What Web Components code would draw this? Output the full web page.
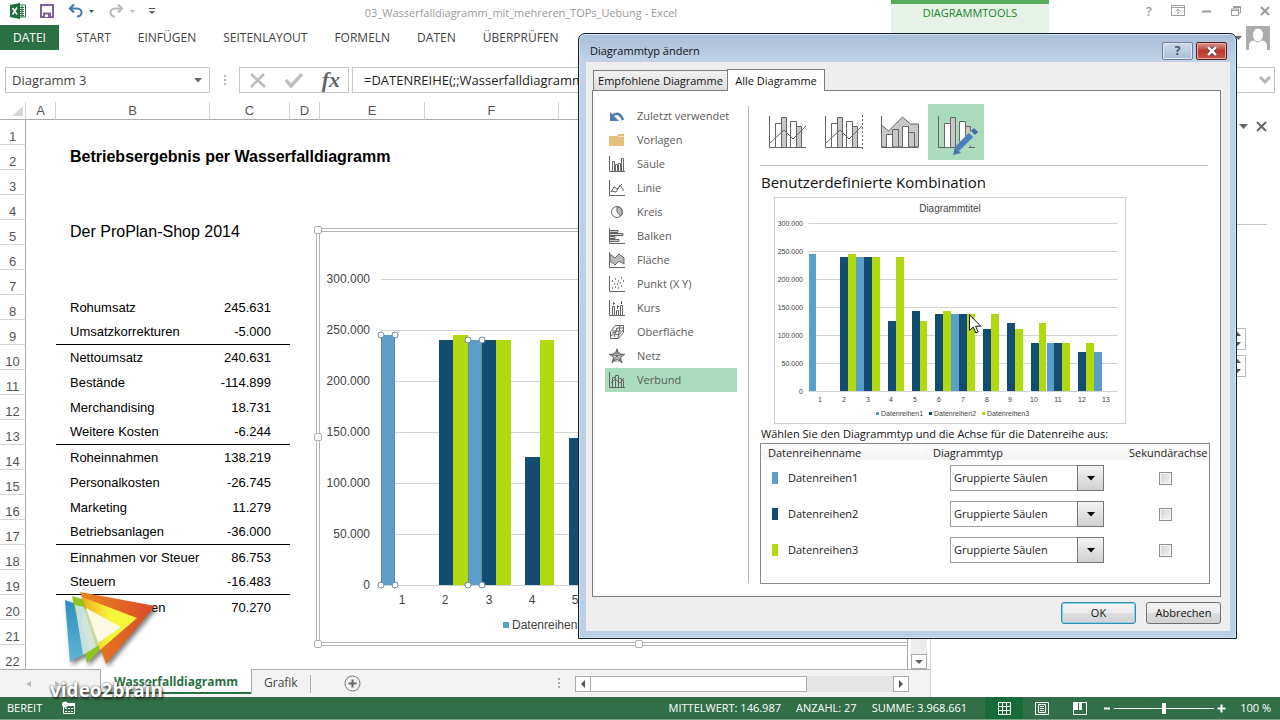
<!DOCTYPE html>
<html lang="de">
<head>
<meta charset="utf-8">
<title>03_Wasserfalldiagramm_mit_mehreren_TOPs_Uebung - Excel</title>
<style>
html, body { height: 100%; margin: 0; }
body { font: 12px/16px "Open Sans", "Noto Sans", sans-serif; color: #444; background: #fff; overflow: hidden; position: relative; }
</style>
</head>
<body>
<excel-window></excel-window>
<chart-type-dialog></chart-type-dialog>
<brand-mark></brand-mark>
<mouse-pointer></mouse-pointer>

<script>
const RESET = `
  :host { box-sizing: border-box; }
  *, *::before, *::after { box-sizing: border-box; }
  button, input, select { font: inherit; color: inherit; margin: 0; padding: 0; border: 0; background: none; border-radius: 0; outline: 0; }
  button { display: flex; align-items: center; justify-content: center; white-space: nowrap; }
  svg { display: block; flex: none; }
`;
function define(name, css, html, setup) {
  customElements.define(name, class extends HTMLElement {
    constructor() {
      super();
      const t = document.createElement('template');
      t.innerHTML = `<style>${RESET}${css}</style>${typeof html === 'function' ? html(this) : html}`;
      this.attachShadow({ mode: 'open' }).append(t.content.cloneNode(true));
      if (setup) setup(this, this.shadowRoot);
    }
  });
}

/* ---------- shared data ---------- */
const SERIES = [
  { name: 'Datenreihen1', color: '#5b9fc9', values: [245.6, 0, 240.6, 0, 0, 0, 138.2, 0, 0, 0, 86.8, 0, 70.3] },
  { name: 'Datenreihen2', color: '#134d72', values: [0, 240.6, 240.6, 125.7, 144.5, 138.2, 138.2, 111.5, 122.7, 86.8, 86.8, 70.3, 0] },
  { name: 'Datenreihen3', color: '#b1d90f', values: [0, 245.6, 240.6, 240.6, 125.7, 144.5, 138.2, 138.2, 111.5, 122.7, 86.8, 86.8, 0] }
];
const AXIS = ['300.000', '250.000', '200.000', '150.000', '100.000', '50.000', '0'];

/* Clustered column chart drawn as SVG; o holds the geometry in pixels */
function columnChart(o) {
  const base = o.top + o.step * 6;
  let s = `<svg width="${o.w}" height="${o.h}" font-family="Liberation Sans, Arial, sans-serif" font-size="${o.font}" fill="#444" role="img" aria-label="Säulendiagramm">`;
  AXIS.forEach((t, i) => {
    const y = o.top + i * o.step;
    s += `<path d="M${o.left} ${y + .5}H${o.right}" stroke="#d3d3d3"/>`;
    s += `<text x="${Math.floor(o.left) - o.axisGap}" y="${y + o.drop}" text-anchor="end">${t}</text>`;
  });
  SERIES.forEach((ser, k) => ser.values.forEach((v, i) => {
    if (!v) return;
    const x = Math.round(o.left + i * o.cat + k * o.bar), x2 = Math.round(o.left + i * o.cat + (k + 1) * o.bar);
    const h = Math.floor(v * o.step / 50);
    s += `<rect x="${x}" y="${base - h}" width="${x2 - x}" height="${h}" fill="${ser.color}"/>`;
  }));
  if (o.selected) SERIES[0].values.forEach((v, i) => {
    if (!v) return;
    const x = Math.round(o.left + i * o.cat), x2 = Math.round(o.left + i * o.cat + o.bar), y = base - Math.floor(v * o.step / 50);
    s += `<path d="M${x + .5} ${base}V${y}M${x2 - .5} ${base}V${y}" stroke="#6f8797"/>`;
    [x, x2].forEach(a => [base, y].forEach(b => s += `<circle cx="${a}" cy="${b}" r="3" fill="#fff" stroke="#6d8ba3"/>`));
  });
  for (let i = 0; i < o.labels; i++)
    s += `<text x="${Math.floor(o.left + (i + .5) * o.cat)}" y="${base + o.catDrop}" text-anchor="middle">${i + 1}</text>`;
  SERIES.forEach((ser, k) => {
    const x = o.legendX + k * o.legendStep;
    s += `<rect x="${x}" y="${o.legendY - o.key}" width="${o.key}" height="${o.key}" fill="${ser.color}"/>`;
    s += `<text x="${x + o.key + o.keyGap}" y="${o.legendY + o.legendDrop}">${ser.name}</text>`;
  });
  if (o.title) s += `<text x="${o.w / 2}" y="14" font-size="10" text-anchor="middle">${o.title}</text>`;
  return s + '</svg>';
}

/* ---------- window header: title row, ribbon tabs ---------- */
define('excel-header', `
  :host { display: grid; grid-template-columns: 151px 1fr 158px 231px; grid-template-rows: 25px 25px; height: 67px; }
  .quick { display: flex; align-items: center; padding: 0 0 3px 10px; }
  .quick button { margin-right: 6px; height: 18px; }
  .title { text-align: center; color: #9a9a9a; font-size: 11px; line-height: 26px; white-space: nowrap; }
  .context { grid-column: 3; grid-row: 1 / 3; background: #e6f2e8; border-top: 4px solid #57ac5b; color: #20861f; font-size: 11px; line-height: 18px; text-align: center; }
  .controls { display: flex; justify-content: flex-end; gap: 15px; padding: 0 8px 3px 0; align-items: center; color: #9c9c9c; }
  .controls button { width: 14px; height: 16px; font-size: 13px; font-weight: 600; }
  nav { grid-row: 2; grid-column: 1 / 3; display: flex; align-items: stretch; }
  nav button { margin-right: 27px; color: #444; }
  nav .file { background: #2b7043; color: #fff; width: 59px; margin-right: 17px; }
  .account { grid-row: 2; grid-column: 4; display: flex; justify-content: flex-end; padding-right: 10px; gap: 4px; }
`, `
  <div class="quick">
    <button aria-label="Excel" style="margin-right:14px"><svg width="16" height="16"><path d="M8 2h7.500v12H8z" fill="#fff" stroke="#2b7043"/><path d="M10 4.500h4M10 6.500h4M10 8.500h4M10 10.500h4M10 12.500h4M12 3v11" stroke="#2b7043"/><path d="M0 2 10 0v16L0 14z" fill="#1d6b3b"/><path d="m2.500 5 4.500 6.500M7 4.500 2.500 11.500" stroke="#fff" stroke-width="1.600"/></svg></button>
    <button aria-label="Speichern" style="margin-right:14px"><svg width="14" height="14"><path d="M1 1h12v12H1z" fill="#fff" stroke="#80609c" stroke-width="2"/><path d="M3 8.500h8V14H3z" fill="#80609c"/><path d="M5 10.500h3V13H5z" fill="#fff"/></svg></button>
    <button aria-label="Rückgängig"><svg width="15" height="14"><path d="M2 4.500h7c6 0 6 8 0 8" fill="none" stroke="#4675ae" stroke-width="2"/><path d="M6 .5 2 4.500l4 4" fill="none" stroke="#4675ae" stroke-width="2.200"/></svg></button>
    <button aria-label="Rückgängig-Liste" style="margin-right:15px"><svg width="5" height="3"><path d="M0 0h5L2.500 3z" fill="#555"/></svg></button>
    <button aria-label="Wiederholen"><svg width="15" height="14"><path d="M13 4.500H6c-6 0-6 8 0 8" fill="none" stroke="#b9b9b9" stroke-width="2"/><path d="m9 .5 4 4-4 4" fill="none" stroke="#b9b9b9" stroke-width="2.200"/></svg></button>
    <button aria-label="Wiederholen-Liste" style="margin-right:14px"><svg width="5" height="3"><path d="M0 0h5L2.500 3z" fill="#bbb"/></svg></button>
    <button aria-label="Anpassen" style="margin:0"><svg width="6" height="7"><path d="M0 .5h6" stroke="#555"/><path d="M0 3h6L3 6z" fill="#555"/></svg></button>
  </div>
  <div class="title">03_Wasserfalldiagramm_mit_mehreren_TOPs_Uebung - Excel</div>
  <div class="context">DIAGRAMMTOOLS</div>
  <div class="controls">
    <button aria-label="Hilfe">?</button>
    <button aria-label="Menüband"><svg width="14" height="12"><path d="M.5.500h13v10H.5zM.5 2.500h13M7 9V4.500M4.500 6.500 7 4l2.500 2.500" fill="none" stroke="#9c9c9c"/></svg></button>
    <button aria-label="Minimieren"><svg width="10" height="3"><path d="M0 1.500h9" stroke="#9c9c9c" stroke-width="2"/></svg></button>
    <button aria-label="Wiederherstellen"><svg width="11" height="10"><path d="M.5 3h7v6.500h-7zM.5 4.500h7M2.500 2.500V.5h7V7H8M3 1.500h6" fill="none" stroke="#9c9c9c"/></svg></button>
    <button aria-label="Schließen"><svg width="10" height="10"><path d="m1 1 8 8m0-8L1 9" stroke="#9c9c9c" stroke-width="2"/></svg></button>
  </div>
  <nav>
    <button class="file">DATEI</button><button>START</button><button>EINFÜGEN</button><button>SEITENLAYOUT</button><button>FORMELN</button><button>DATEN</button><button>ÜBERPRÜFEN</button>
  </nav>
  <div class="account"><button aria-label="Konto-Menü"><svg width="7" height="4"><path d="M0 0h7L3.500 4z" fill="#666"/></svg></button><button aria-label="Konto"><svg width="24" height="24"><path d="M0 0h24v24H0z" fill="#ababab"/><path d="M3 24v-4q0-5 5-5.500h8q5 .5 5 5.500v4z" fill="#fff"/><ellipse cx="12" cy="9" rx="5.500" ry="7" fill="#fff" stroke="#ababab"/></svg></button></div>
`);

/* ---------- name box and formula line ---------- */
define('formula-bar', `
  :host { display: flex; height: 35px; padding: 0 5px 9px; font-size: 13px; }
  .box { display: flex; align-items: center; border: 1px solid #c6c6c6; }
  .name { width: 205px; padding: 0 7px 0 6px; }
  input { width: 100%; min-width: 0; }
  .dots { width: 29px; align-self: center; }
  .fx { width: 110px; margin-right: 3px; justify-content: space-between; padding: 0 8px 0 9px; }
  .line { flex: 1; padding: 0 3px 0 11px; color: #222; }
  .fx button:last-child { font: italic bold 22px/22px "Liberation Serif", serif; color: #666; }
`, `
  <div class="box name"><input aria-label="Namenfeld" value="Diagramm 3"><button aria-label="Namenliste"><svg width="8" height="5"><path d="M0 0h8L4 4.500z" fill="#666"/></svg></button></div>
  <svg class="dots" width="29" height="12"><path d="M14 1h2v2h-2zM14 5h2v2h-2zM14 9h2v2h-2z" fill="#b5b5b5"/></svg>
  <div class="box fx">
    <button aria-label="Abbrechen"><svg width="18" height="17"><path d="m2 2 14 13M15 2 2 15" stroke="#bdbdbd" stroke-width="2.500"/></svg></button>
    <button aria-label="Eingeben"><svg width="20" height="16"><path d="m2 8 5 6L18 2" fill="none" stroke="#c0c0c0" stroke-width="3.500"/></svg></button>
    <button aria-label="Funktion einfügen">fx</button>
  </div>
  <div class="box line"><input aria-label="Formel" value="=DATENREIHE(;;Wasserfalldiagramm"><button aria-label="Erweitern"><svg width="12" height="8"><path d="m1 1 5 5 5-5" fill="none" stroke="#b5b5b5" stroke-width="3"/></svg></button></div>
`);

/* ---------- embedded chart object with selection frame ---------- */
define('sheet-chart', `
  :host { display: block; width: 644px; height: 418px; border: 1px solid #b4b4b4; padding: 2px; background: #fff; }
  .inner { border: 1px solid #b4b4b4; height: 100%; position: relative; overflow: hidden; }
  i { position: absolute; width: 8px; height: 8px; border: 1px solid #b0b0b0; border-radius: 2px; background: #fff; }
  .w { left: -3px; } .c { left: 318px; } .e { right: -3px; } .n { top: -3px; } .m { top: 204px; } .s { bottom: -3px; }
`, `
  <div class="inner">${columnChart({ w: 638, h: 412, font: 12, left: 61, right: 622, top: 47, step: 51, axisGap: 11, drop: 4, cat: 43.3, bar: 14.4, labels: 12, catDrop: 19, legendX: 183, legendY: 396, legendStep: 94, key: 6, keyGap: 3, legendDrop: 1, selected: true })}</div>
  <i class="w n"></i><i class="w m"></i><i class="w s"></i><i class="c s"></i><i class="e s"></i>
`);

/* ---------- worksheet grid ---------- */
const CELLS = {
  8: ['Rohumsatz', '245.631'], 9: ['Umsatzkorrekturen', '-5.000', 1], 10: ['Nettoumsatz', '240.631'],
  11: ['Bestände', '-114.899'], 12: ['Merchandising', '18.731'], 13: ['Weitere Kosten', '-6.244', 1],
  14: ['Roheinnahmen', '138.219'], 15: ['Personalkosten', '-26.745'], 16: ['Marketing', '11.279'],
  17: ['Betriebsanlagen', '-36.000', 1], 18: ['Einnahmen vor Steuer', '86.753'], 19: ['Steuern', '-16.483', 1],
  20: ['Nettoeinnahmen', '70.270']
};
const HEADINGS = { 2: '<b>Betriebsergebnis per Wasserfalldiagramm</b>', 5: '<span>Der ProPlan-Shop 2014</span>' };
function sheetRows() {
  let s = '';
  for (let r = 1; r <= 22; r++) {
    const c = CELLS[r] || ['', ''];
    const line = c[2] ? ' class="total"' : '';
    s += `<tr${line}><th scope="row">${r}</th><td></td><td class="b">${HEADINGS[r] || c[0]}</td><td class="c">${c[1]}</td><td colspan="4"></td></tr>`;
  }
  return s;
}
define('work-sheet', `
  :host { display: grid; grid-template-columns: 1fr 22px; min-height: 0; border-bottom: 1px solid #ababab; background: #fff; }
  .view { position: relative; overflow: hidden; border-right: 1px solid #ababab; }
  table { table-layout: fixed; border-spacing: 0; width: 100%; font: 13px/16px "Liberation Sans", Arial, sans-serif; color: #000; }
  th { font-weight: normal; color: #555; padding: 0; text-align: center; }
  thead th { height: 18px; padding-top: 1px; border-right: 1px solid #d4d4d4; border-bottom: 1px solid #ababab; }
  thead th:first-child svg { margin-left: 12px; }
  tbody tr { height: 25px; }
  tbody th { border-right: 1px solid #ababab; border-bottom: 1px solid #d4d4d4; vertical-align: bottom; line-height: 15px; }
  td { padding: 0; white-space: nowrap; vertical-align: middle; }
  .b { padding-left: 14px; }
  .c { padding-right: 19px; text-align: right; }
  .total .b, .total .c { border-bottom: 1px solid #000; }
  b, span { font-size: 16px; }
  sheet-chart { position: absolute; left: 316px; top: 126px; }
  .scroll { display: flex; flex-direction: column; padding: 18px 3px 0; }
  .scroll div { flex: 1; background: #ececec; }
  .scroll button { width: 16px; height: 15px; border: 1px solid #ababab; background: #fff; }
`, `
  <div class="view">
    <table>
      <colgroup><col style="width:26px"><col style="width:30px"><col style="width:154px"><col style="width:80px"><col style="width:30px"><col style="width:105px"><col style="width:134px"><col></colgroup>
      <thead><tr><th aria-label="Alles markieren"><svg width="11" height="10"><path d="M11 0v10H0z" fill="#d8d8d8"/></svg></th><th>A</th><th>B</th><th>C</th><th>D</th><th>E</th><th>F</th><th>G</th></tr></thead>
      <tbody>${sheetRows()}</tbody>
    </table>
    <sheet-chart></sheet-chart>
  </div>
  <div class="scroll"><div></div><button aria-label="Nach unten"><svg width="8" height="4"><path d="M0 0h8L4 4z" fill="#666"/></svg></button></div>
`);

define('sheet-tabs', `
  :host { display: flex; height: 27px; background: #f3f3f3; }
  .nav { width: 100px; display: flex; gap: 24px; padding-left: 26px; }
  .tab { padding: 0 12px; height: 25px; }
  .on { background: #fff; color: #2b7043; font-weight: bold; border: solid #ababab; border-width: 0 1px 0; box-shadow: inset 0 -2px #2b7043; margin-top: -1px; padding: 0 11px; width: 152px; }
  .sep { width: 1px; height: 18px; background: #ababab; align-self: center; }
  .add { margin-left: 33px; }
  .dots { margin-left: auto; align-self: center; }
  .hs { width: 334px; height: 16px; align-self: center; margin: 0 21px 0 14px; display: flex; background: #e6e6e6; }
  .hs button { width: 16px; border: 1px solid #ababab; background: #fff; }
  .hs div { width: 217px; border: 1px solid #ababab; background: #fff; margin-right: auto; margin-left: -1px; }
`, `
  <div class="nav"><button aria-label="Vorheriges Blatt"><svg width="5" height="6"><path d="M5 0v6L0 3z" fill="#bbb"/></svg></button><button aria-label="Nächstes Blatt"><svg width="5" height="6"><path d="M0 0v6l5-3z" fill="#bbb"/></svg></button></div>
  <button class="tab on">Wasserfalldiagramm</button><button class="tab">Grafik</button><div class="sep"></div>
  <button class="add" aria-label="Neues Blatt"><svg width="17" height="17"><circle cx="8.500" cy="8.500" r="7.500" fill="none" stroke="#777"/><path d="M8.500 4.500v8M4.500 8.500h8" stroke="#666" stroke-width="2"/></svg></button>
  <svg class="dots" width="4" height="11"><path d="M1 0h2v2H1zM1 4h2v2H1zM1 8h2v2H1z" fill="#aaa"/></svg>
  <div class="hs"><button aria-label="Nach links"><svg width="4" height="8"><path d="M4 0v8L0 4z" fill="#555"/></svg></button><div></div><button aria-label="Nach rechts"><svg width="4" height="8"><path d="M0 0v8l4-4z" fill="#555"/></svg></button></div>
`);

/* ---------- formatting pane on the right ---------- */
define('task-pane', `
  :host { display: flex; flex-direction: column; align-items: flex-end; border-left: 1px solid #d4d4d4; padding: 18px 13px 0 16px; }
  .top { display: flex; gap: 8px; height: 12px; align-items: center; }
  hr { width: 100%; height: 1px; border: 0; margin: 92px 0 103px; background: #c6c6c6; }
  .spin { display: flex; justify-content: flex-end; width: 90px; height: 22px; margin: 0 21px 5px 0; border: 1px solid #b8b8b8; }
  .spin div { display: flex; flex-direction: column; justify-content: space-around; width: 15px; align-items: center; }
`, `
  <div class="top"><button aria-label="Optionen"><svg width="9" height="5"><path d="M0 0h9L4.500 5z" fill="#666"/></svg></button><button aria-label="Schließen"><svg width="11" height="11"><path d="m1 1 9 9m0-9-9 9" stroke="#666" stroke-width="2"/></svg></button></div>
  <hr>
  ${`<div class="spin"><div><button aria-label="Erhöhen"><svg width="7" height="4"><path d="M0 4h7L3.500 0z" fill="#555"/></svg></button><button aria-label="Verringern"><svg width="7" height="4"><path d="M0 0h7L3.500 4z" fill="#555"/></svg></button></div></div>`.repeat(2)}
`);

define('status-bar', `
  :host { display: flex; align-items: stretch; height: 23px; background: #317046; border-bottom: 1px solid #76a386; color: #fff; font-size: 11px; line-height: 22px; white-space: nowrap; padding: 0 9px 0 7px; }
  .macro { margin-left: 20px; margin-right: auto; }
  .sum { margin-right: 15px; }
  .view { width: 38px; }
  .on { background: #176b37; margin-left: 3px; }
  input { appearance: none; width: 100px; margin: 0 3px; background: linear-gradient(#fff, #fff) center / 100% 1px no-repeat; }
  input::-webkit-slider-thumb { appearance: none; width: 4px; height: 11px; background: #fff; }
  .pct { margin-left: 14px; }
`, `
  <span>BEREIT</span>
  <button class="macro" aria-label="Makro aufzeichnen"><svg width="14" height="14"><path d="M1.500 4.500h11v8h-11z" fill="none" stroke="#fff"/><path d="M1 2h12v3H1z" fill="#fff"/><path d="M3 7.500h8M3 10.500h8" stroke="#fff" stroke-dasharray="2 1"/><circle cx="3" cy="3.500" r="3" fill="#fff"/></svg></button>
  <span class="sum">MITTELWERT: 146.987</span><span class="sum">ANZAHL: 27</span><span class="sum">SUMME: 3.968.661</span>
  <button class="view on" aria-label="Normal"><svg width="13" height="13"><path d="M.5.500h12v12H.5zM4.500 0v13M8.500 0v13M0 4.500h13M0 8.500h13" fill="none" stroke="#fff"/></svg></button>
  <button class="view" aria-label="Seitenlayout"><svg width="14" height="13"><path d="M.5.500h13v12H.5zM3.500 2.500h7v8h-7zM5 4.500h4M5 6.500h4M5 8.500h4" fill="none" stroke="#fff"/></svg></button>
  <button class="view" aria-label="Umbruchvorschau"><svg width="14" height="13"><path d="M.5.500h13v12H.5z" fill="none" stroke="#fff"/><path d="M1 1h4v7H1zM6 1h3v7H6z" fill="#fff"/></svg></button>
  <button aria-label="Verkleinern" style="margin-left:5px"><svg width="7" height="9"><path d="M0 4.500h6" stroke="#fff" stroke-width="2"/></svg></button>
  <input type="range" aria-label="Zoom" min="0" max="100" value="50">
  <button aria-label="Vergrößern"><svg width="9" height="9"><path d="M.5 4.500h8M4.500.500v8" stroke="#fff" stroke-width="2"/></svg></button>
  <span class="pct">100 %</span>
`);

define('excel-window', `
  :host { display: grid; grid-template-rows: auto auto 1fr auto; height: 100%; }
  main { display: grid; grid-template-columns: 1fr 350px; min-height: 0; }
  section { display: grid; grid-template-rows: 1fr auto; min-height: 0; min-width: 0; }
`, `
  <excel-header></excel-header>
  <formula-bar></formula-bar>
  <main><section><work-sheet></work-sheet><sheet-tabs></sheet-tabs></section><task-pane></task-pane></main>
  <status-bar></status-bar>
`);

/* ---------- dialog parts ---------- */
const AX = '<path d="M.5 0v15.500H16" fill="none" stroke="#666"/>';
const svg16 = (d) => `<svg width="16" height="16" fill="none" stroke="#666">${d}</svg>`;
const KINDS = [
  ['Zuletzt verwendet', '<svg width="16" height="16"><path d="M3 8q7-6 11 4" fill="none" stroke="#4f7db3" stroke-width="2.500"/><path d="M1 4v9h9z" fill="#4f7db3"/></svg>'],
  ['Vorlagen', '<svg width="16" height="16"><path d="M0 4h8l2-2h5v12H0z" fill="#e6bf7a"/><path d="M9 4.500h6" stroke="#f6e3bd"/></svg>'],
  ['Säule', svg16(AX + '<path d="M3.500 15V5.500h2V15M6.500 15V8.500h2V15M9.500 15V7.500h2V15M12.500 15V2.500h2V15"/>')],
  ['Linie', svg16(AX + '<path d="M2 12 5 7l3 2 5-5M2 11l5 1 4-7 4 6"/>')],
  ['Kreis', svg16('<circle cx="8" cy="8" r="5.500"/><path d="M8 2.500A5.500 5.500 0 0 1 11.500 12L8 8z" fill="#bbb"/>')],
  ['Balken', svg16(AX + '<path d="M1 2.500h8v2H1M1 5.500h13v2H1M1 8.500h5v2H1M1 11.500h9v2H1" fill="#ccc"/>')],
  ['Fläche', svg16('<path d="M1 2l5 4 4-4 5 4v6l-5-3-4 4-5-4z" fill="#bbb"/>' + AX)],
  ['Punkt (X Y)', svg16(AX + '<path d="M3 5h1M6 3h1M9 5h1M12 2h1M5 8h1M8 8h1M11 7h1M14 5h1M3 12h1M6 11h1M9 12h1M12 10h1" stroke-width="1.500"/>')],
  ['Kurs', svg16(AX + '<path d="M3.500 15V6.500h2V15M7.500 15v-4.500h2V15M11.500 15V5.500h2V15M4.500 2v3M8.500 5v4M12.500 1v3M4 3.500h2M8 6.500h2"/>')],
  ['Oberfläche', svg16('<path d="M1.500 14.500v-7l5-6h8v7l-5 6zM3 9l4-1 1-4h6M1.500 12 5 10l5 1 4-5M5 13l3-9M9 14l2-12M3 7h9"/>')],
  ['Netz', svg16('<path d="M8 3 3 6.500 5 13h6l2-6.500z" stroke="#999" fill="#ddd"/><path d="M8 .5V8M.5 6 8 8M3 15l5-7M13 15 8 8M15.500 6 8 8M8 1l1.500 5 6 .5L11 9.500l2 5-5-3.500-5 3.500 2-5L.5 6.500l6-.5z"/>')],
  ['Verbund', svg16(AX + '<path d="M3.500 15V5.500h3V15M6.500 15V3.500h3V15M9.500 15V6.500h3V15M12.500 15V8.500h2V15M2 11l4-4 5 4 4-5"/>')]
];
define('chart-kind-list', `
  :host { display: flex; flex-direction: column; width: 144px; padding-right: 11px; border-right: 1px solid #b6b6b6; margin: 2px 0 0; }
  button { height: 24px; justify-content: flex-start; padding-left: 4px; gap: 12px; color: #5c5c5c; }
  button:first-of-type { margin-top: -2px; }
  .on { background: #a9dbbd; }
`, KINDS.map(k => `<button${k[0] === 'Verbund' ? ' class="on"' : ''}>${k[1]}${k[0]}</button>`).join(''));

const COLS = '<path d="M7.500 32V8.500h6V32" fill="#fff"/><path d="M13.500 32V2.500h5V32" fill="#c8c8c8"/><path d="M22.500 32V6.500h6V32" fill="#fff"/><path d="M28.500 32V11.500h5V32" fill="#c8c8c8"/><path d="M1.500 1v31.500H38"/>';
const sub = d => `<svg width="40" height="34" fill="none" stroke="#666">${d}</svg>`;
const SUBS = [
  ['Gruppierte Säulen/Linien', sub(COLS + '<path d="m2 28 14-13 9 9 13-13"/>')],
  ['Gruppierte Säulen/Linien auf der Sekundärachse', sub(COLS + '<path d="m2 28 14-13 9 9 13-13"/><path d="M38.500 0v34" stroke-dasharray="2 2"/>')],
  ['Gestapelte Flächen/Gruppierte Säulen', sub('<path d="m1.500 10 7 6 14-14 8 7h8v23h-37z" fill="#c8c8c8"/><path d="M6.500 32V19.500h6V32" fill="#fff"/><path d="M12.500 32V14.500h6V32"/><path d="M22.500 32V11.500h6V32" fill="#fff"/><path d="M28.500 32V17.500h6V32M1.500 1v31.500H38"/>')],
  ['Benutzerdefinierte Kombination', '<svg width="46" height="46" fill="none" stroke="#666"><g transform="translate(4 6)">' + COLS + '</g><path d="m21 45 3-10L41 19l7 7-17 17z" fill="#a9dbbd" stroke="none"/><path d="m20 46 2-8 6 6z" fill="#4576b5" stroke="none"/><path d="m24 40 14-14" stroke="#4a7fbd" stroke-width="6"/><path d="m40 24 3-3" stroke="#3f6ea9" stroke-width="6"/></svg>']
];
define('combo-kinds', `
  :host { display: flex; height: 62px; border-bottom: 1px solid #c0c0c0; }
  button { width: 56px; height: 56px; }
  .on { background: #a9dbbd; }
`, SUBS.map((s, i) => `<button${i === 3 ? ' class="on"' : ''} aria-label="${s[0]}">${s[1]}</button>`).join(''));

define('series-table', `
  :host { display: block; height: 141px; border: 1px solid #888; color: #222; }
  table { width: 100%; table-layout: fixed; border-spacing: 0; }
  th { height: 16px; padding: 0 0 0 7px; font-weight: normal; text-align: left; line-height: 15px; background: linear-gradient(#fff, #f3f3f3); }
  th + th { border-left: 1px solid #f4f4f4; white-space: nowrap; padding-left: 6px; }
  td { height: 36px; padding: 0; }
  .name { padding-left: 11px; }
  .name span { display: flex; align-items: center; gap: 10px; }
  .name i { width: 6px; height: 12px; }
  .pick { position: relative; width: 154px; height: 26px; margin-left: 24px; }
  select { appearance: none; display: block; width: 100%; height: 26px; padding-left: 3px; border: 1px solid #a5a5a5; background: #fff; }
  .pick b { position: absolute; right: 0; top: 0; width: 27px; height: 26px; border: 1px solid #777; background: linear-gradient(#f3f3f3, #d0d0d0); display: grid; place-items: center; pointer-events: none; }
  input { appearance: none; display: block; width: 13px; height: 13px; margin-left: 37px; border: 1px solid #8e8f8f; background: linear-gradient(135deg, #d0d0d0, #f6f6f6); box-shadow: inset 0 0 0 1px #f4f4f4; }
`, `
  <table>
    <colgroup><col style="width:165px"><col><col style="width:87px"></colgroup>
    <thead><tr><th>Datenreihenname</th><th>Diagrammtyp</th><th>Sekundärachse</th></tr></thead>
    <tbody>${SERIES.map(s => `<tr>
      <td class="name"><span><i style="background:${s.color}"></i>${s.name}</span></td>
      <td><div class="pick"><select aria-label="Diagrammtyp ${s.name}"><option>Gruppierte Säulen</option></select><b><svg width="8" height="5"><path d="M0 0h8L4 4.500z" fill="#000"/></svg></b></div></td>
      <td><input type="checkbox" aria-label="Sekundärachse ${s.name}"></td></tr>`).join('')}</tbody>
  </table>
`);

define('chart-preview', `
  :host { display: block; width: 352px; height: 227px; border: 1px solid #d0d0d0; }
`, columnChart({ w: 350, h: 225, font: 7, left: 33.5, right: 343, top: 25, step: 28, axisGap: 5, drop: 3, cat: 23.8, bar: 7.9, labels: 13, catDrop: 11, legendX: 101, legendY: 217, legendStep: 53, key: 3, keyGap: 2, legendDrop: 1, title: 'Diagrammtitel' }));

define('chart-type-dialog', `
  :host { position: absolute; left: 578px; top: 33px; width: 659px; display: block; border: 1px solid #10202e; border-radius: 7px 7px 0 0; background: linear-gradient(#a9bfd8, #bfd2e8 28px, #bdd0e8 90px, #b9d0e6); box-shadow: inset 0 0 0 1px #d7e4f2; font-size: 11px; padding: 0 6px 7px 7px; color: #111; }
  header { height: 28px; display: flex; align-items: center; padding: 6px 3px 0 4px; gap: 3px; }
  h2 { margin: 0 auto 0 0; font: inherit; }
  header button { width: 31px; height: 18px; border: 1px solid #6d7d92; border-radius: 2px; background: linear-gradient(#cddbea, #a9bdd6); box-shadow: inset 0 0 0 1px #dfe9f4; font-weight: bold; font-size: 12px; color: #45566e; }
  header .x { background: linear-gradient(#d99a92, #b8352d 50%, #c9564a); border-color: #5a1d1d; box-shadow: inset 0 0 0 1px #e3a9a3; }
  .body { background: #eeeeee; padding: 7px 9px 7px 6px; }
  .tabs { display: flex; align-items: flex-end; padding-left: 1px; }
  .tabs button { border: 1px solid #7d7d7d; border-bottom: 0; height: 20px; width: 135px; background: linear-gradient(#f3f3f3, #dcdcdc); }
  .tabs .on { height: 22px; width: 98px; background: #fff; margin: 0 0 -1px -1px; position: relative; }
  .panel { background: #fff; border: 1px solid #7d7d7d; display: flex; gap: 11px; padding: 13px 10px 13px 12px; height: 507px; }
  .main { flex: 1; min-width: 0; }
  h3 { font: 15px/24px "Open Sans", "Noto Sans", sans-serif; margin: 4px 0 3px 1px; }
  chart-preview { margin: 0 0 0 14px; }
  p { margin: 0 0 0 1px; line-height: 19px; }
  combo-kinds { margin-right: 2px; }
  footer { display: flex; justify-content: flex-end; gap: 10px; padding-top: 5px; }
  footer button { width: 75px; height: 22px; border: 1px solid #707070; border-radius: 3px; background: linear-gradient(#f3f3f3, #ebebeb 50%, #dddddd 50%, #d2d2d2); }
  footer .ok { border-color: #3a8aa8; box-shadow: inset 0 0 0 1px #7fd3e8; }
`, `
  <header><h2>Diagrammtyp ändern</h2><button aria-label="Hilfe">?</button><button class="x" aria-label="Schließen"><svg width="12" height="10"><path d="m2 1 8 8m0-8L2 9" stroke="#5a2222" stroke-width="4"/><path d="m2 1 8 8m0-8L2 9" stroke="#fff" stroke-width="2.500"/></svg></button></header>
  <div class="body">
    <div class="tabs"><button>Empfohlene Diagramme</button><button class="on">Alle Diagramme</button></div>
    <div class="panel">
      <chart-kind-list></chart-kind-list>
      <div class="main">
        <combo-kinds></combo-kinds>
        <h3>Benutzerdefinierte Kombination</h3>
        <chart-preview></chart-preview>
        <p>Wählen Sie den Diagrammtyp und die Achse für die Datenreihe aus:</p>
        <series-table></series-table>
      </div>
    </div>
    <footer><button class="ok">OK</button><button>Abbrechen</button></footer>
  </div>
`);

/* ---------- overlays ---------- */
define('brand-mark', `
  :host { position: absolute; left: 50px; top: 590px; pointer-events: none; }
  svg { filter: drop-shadow(2px 3px 2px rgba(0, 0, 0, .5)); }
  span { display: block; margin-top: 12px; font-size: 19px; line-height: 24px; font-weight: bold; color: #fff; text-shadow: 1px 2px 3px #222, 0 0 2px #555; }
`, `
  <svg width="112" height="76">
    <defs>
      <linearGradient id="o" x2="1"><stop offset="0" stop-color="#e8871f"/><stop offset="1" stop-color="#d8492a"/></linearGradient>
      <linearGradient id="y" x2="1"><stop offset="0" stop-color="#f0a81c"/><stop offset=".5" stop-color="#f8f63a"/></linearGradient>
      <linearGradient id="b" y2="1" x2="0"><stop offset="0" stop-color="#2f8fc0"/><stop offset="1" stop-color="#5fb4d8"/></linearGradient>
    </defs>
    <path d="M15 10 26 14 38 62 20 72z" fill="url(#b)"/>
    <path d="m22 6 12 4 18 48-15 15z" fill="#8fc31f"/>
    <path d="m25 15 9 2 12 40-13 8z" fill="#c5e0dc"/>
    <path d="m30 2 75 14-49 58z" fill="url(#o)"/>
    <path d="m32 7 55 21-37 32z" fill="url(#y)"/>
    <path d="m36 18 35 19-23 16z" fill="#fdf8e4"/>
    <path d="m36 18 13 36-3 3-7 2-8-28z" fill="#d5e6d4" fill-opacity=".7"/>
  </svg>
  <span>video2brain</span>
`);
define('mouse-pointer', `
  :host { position: absolute; left: 969px; top: 314px; pointer-events: none; }
`, `<svg width="13" height="20"><path d="M.5.800v15.700l3.700-3.500 2.600 6 2.400-1-2.600-5.800h5.200z" fill="#fff" stroke="#111"/></svg>`);
</script>
</body>
</html>
